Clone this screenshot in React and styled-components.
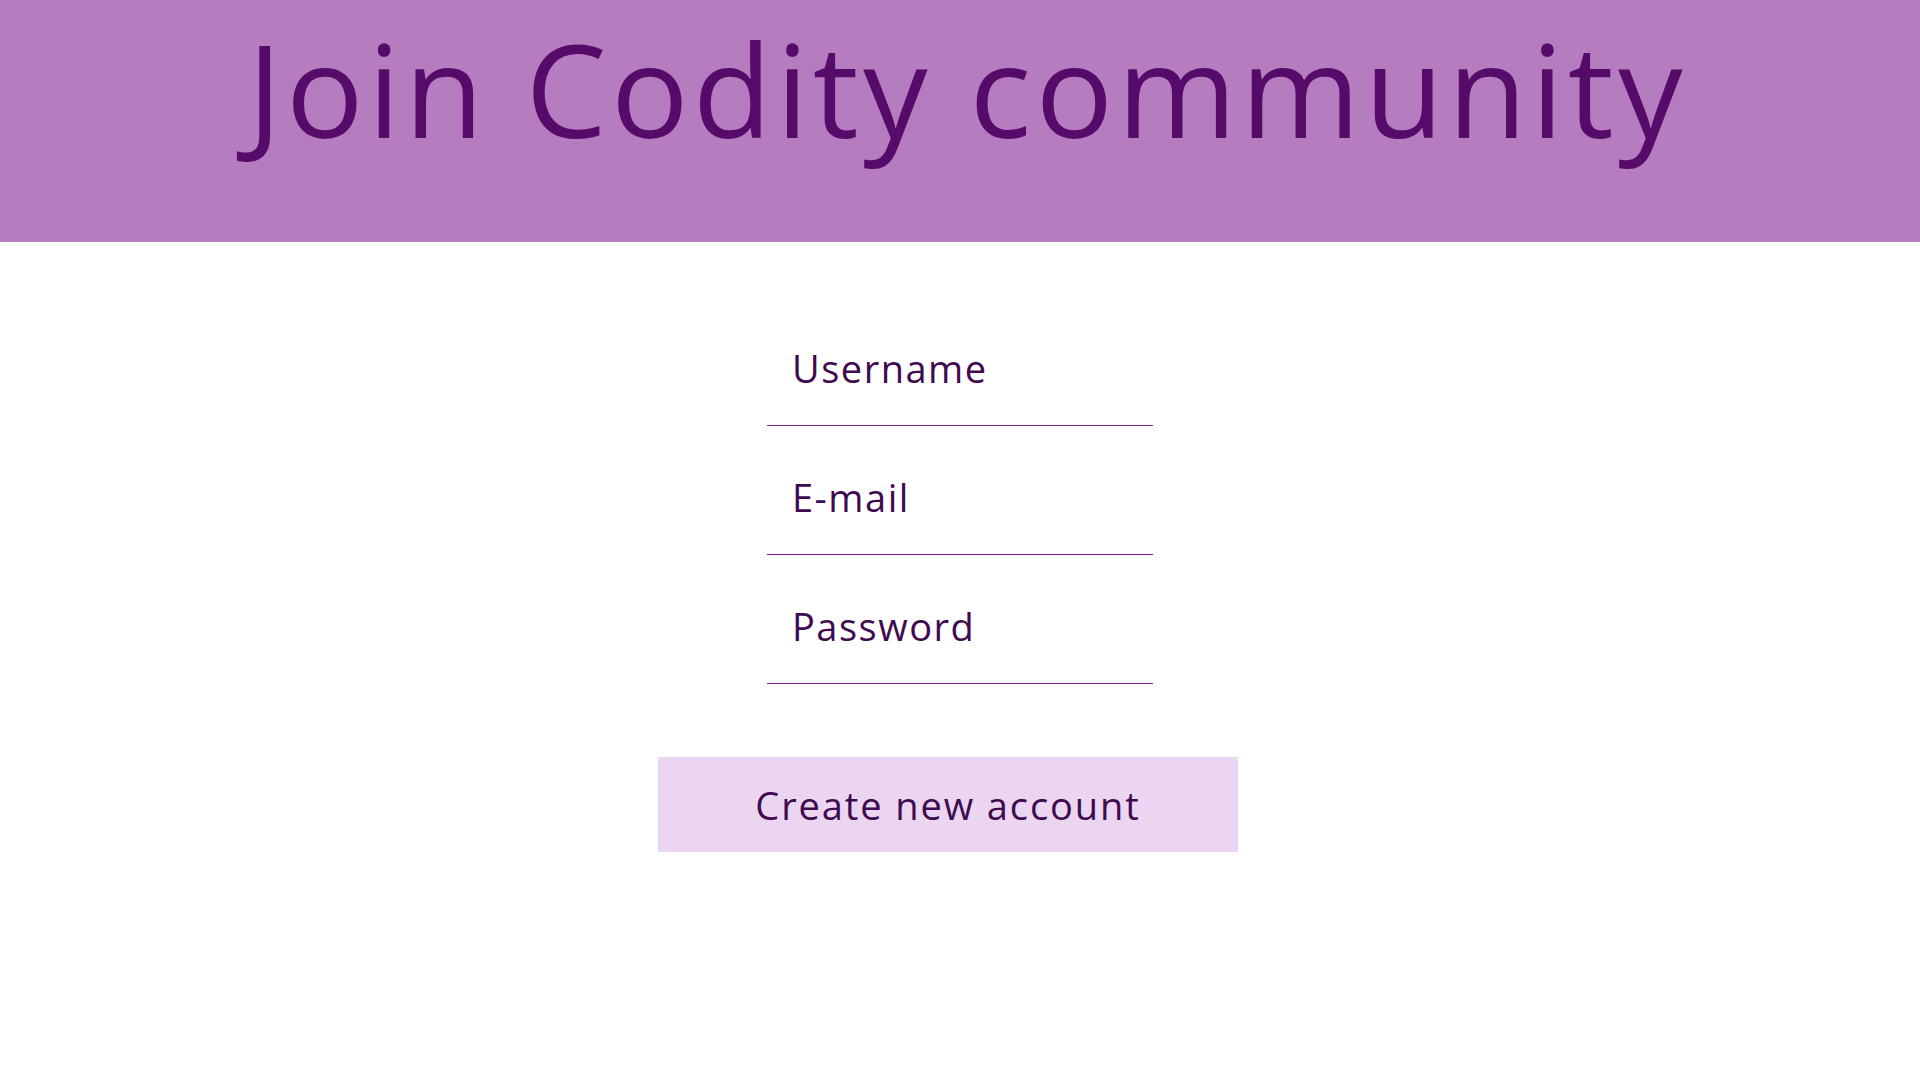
import React from 'react';
import styled, { createGlobalStyle } from 'styled-components';

const GlobalStyle = createGlobalStyle`
  body {
    margin: 0;
    background: #ffffff;
    font-family: "Open Sans", "Noto Sans", sans-serif;
  }
`;

const Header = styled.header`
  height: 242px;
  background: #b57dc0;
  display: flex;
  justify-content: center;
`;

const Title = styled.h1`
  margin: 0;
  padding: 8px 0 0 14px;
  font-family: "Open Sans", "Noto Sans", sans-serif;
  font-weight: 400;
  font-size: 129px;
  line-height: 160px;
  letter-spacing: 4.2px;
  color: #560a6a;
`;

const Form = styled.form`
  display: flex;
  flex-direction: column;
  align-items: center;
  padding-top: 94px;
`;

const Field = styled.input`
  width: 386px;
  height: 90px;
  box-sizing: border-box;
  margin-bottom: 39px;
  padding: 0 0 25px 25px;
  border: none;
  border-bottom: 1px solid #8b1a9a;
  outline: none;
  background: transparent;
  font-family: "Open Sans", "Noto Sans", sans-serif;
  font-size: 38px;
  letter-spacing: 1.5px;
  color: #3f0a4f;
  &::placeholder {
    color: #3f0a4f;
    opacity: 1;
  }
`;

const Button = styled.button`
  margin: 34px 24px 0 0;
  width: 580px;
  height: 95px;
  border: none;
  background: #ecd5f0;
  font-family: "Open Sans", "Noto Sans", sans-serif;
  font-size: 38px;
  letter-spacing: 1.9px;
  color: #3f0a4f;
  cursor: pointer;
`;

export default function App() {
  return (
    <>
      <GlobalStyle />
      <Header>
        <Title>Join Codity community</Title>
      </Header>
      <Form onSubmit={(e) => e.preventDefault()}>
        <Field type="text" placeholder="Username" />
        <Field type="email" placeholder="E-mail" />
        <Field type="password" placeholder="Password" />
        <Button type="submit">Create new account</Button>
      </Form>
    </>
  );
}
